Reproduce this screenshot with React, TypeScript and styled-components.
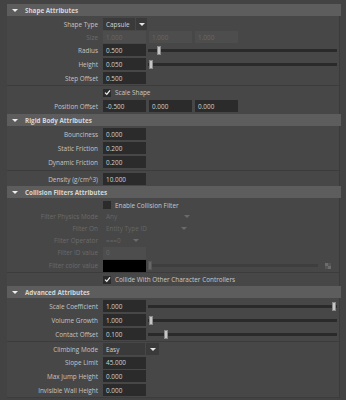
import React from "react";
import styled, { createGlobalStyle } from "styled-components";

const GlobalStyle = createGlobalStyle`
  html, body {
    margin: 0;
    padding: 0;
    background: #434343;
  }
  body {
    font-family: "Open Sans", "Noto Sans", sans-serif;
    font-size: 6.4px;
    color: #c8c8c8;
  }
`;

const Panel = styled.div`
  width: 346px;
  height: 400px;
  overflow: hidden;
  box-sizing: border-box;
  padding: 4px 5px 0 7px;
  display: flex;
  flex-direction: column;
`;

const Header = styled.div`
  height: 12px;
  flex: none;
  background: #5d5d5d;
  display: flex;
  align-items: center;
  padding-left: 5px;
  gap: 7px;
  font-weight: 700;
  font-size: 6.3px;
  color: #d6d6d6;
`;

const Caret = styled.span`
  width: 0;
  height: 0;
  border-left: 3px solid transparent;
  border-right: 3px solid transparent;
  border-top: 3.5px solid #eeeeee;
`;

const Body = styled.div<{ $pt?: number; $pb?: number }>`
  margin-right: 1px;
  background: #474747;
  border-right: 1px solid #3b3b3b;
  padding-top: ${(p) => p.$pt ?? 1}px;
  padding-bottom: ${(p) => p.$pb ?? 0}px;
  display: flex;
  flex-direction: column;
`;

const Row = styled.div<{ $h: number }>`
  height: ${(p) => p.$h}px;
  display: flex;
  align-items: center;
  flex: none;
`;

const Label = styled.div<{ $off?: boolean }>`
  width: 96px;
  flex: none;
  text-align: right;
  padding-right: 5px;
  box-sizing: border-box;
  white-space: nowrap;
  color: ${(p) => (p.$off ? "#6b6b6b" : "#c4c4c4")};
`;

const Field = styled.div<{ $off?: boolean; $w?: number }>`
  width: ${(p) => p.$w ?? 43}px;
  height: 12px;
  flex: none;
  box-sizing: border-box;
  padding-left: 3px;
  display: flex;
  align-items: center;
  background: ${(p) => (p.$off ? "#4d4d4d" : "#2b2b2b")};
  color: ${(p) => (p.$off ? "#686868" : "#d2d2d2")};
`;

const Fields = styled.div`
  display: flex;
  gap: 3px;
`;

const Slider = styled.div<{ $end?: number; $off?: boolean }>`
  position: relative;
  flex: none;
  width: ${(p) => p.$end ?? 189}px;
  margin-left: 2px;
  height: 3px;
  background: ${(p) => (p.$off ? "#3e3e3e" : "#2a2a2a")};
`;

const Thumb = styled.div<{ $off?: boolean }>`
  position: absolute;
  top: -3px;
  width: 4px;
  height: 9px;
  background: ${(p) => (p.$off ? "#666666" : "#c6c6c6")};
  border: 1px solid ${(p) => (p.$off ? "#555555" : "#8a8a8a")};
  box-sizing: border-box;
`;

const Divider = styled.div<{ $h: number }>`
  height: ${(p) => p.$h}px;
  flex: none;
  display: flex;
  align-items: center;
  &::after {
    content: "";
    flex: 1;
    height: 1px;
    background: #3c3c3c;
  }
`;

const Drop = styled.div<{ $w: number; $off?: boolean }>`
  width: ${(p) => p.$w}px;
  height: 12px;
  flex: none;
  display: flex;
  align-items: center;
  box-sizing: border-box;
  padding-left: 3px;
  background: ${(p) => (p.$off ? "transparent" : "#3a3a3a")};
  color: ${(p) => (p.$off ? "#666666" : "#d2d2d2")};
`;

const DropText = styled.span`
  flex: 1;
`;

const DropArrow = styled.div<{ $off?: boolean; $w?: number }>`
  width: ${(p) => p.$w ?? 11}px;
  height: 12px;
  flex: none;
  display: flex;
  align-items: center;
  justify-content: center;
  border-left: 1px solid ${(p) => (p.$off ? "transparent" : "#474747")};
  &::after {
    content: "";
    border-left: 3px solid transparent;
    border-right: 3px solid transparent;
    border-top: 3px solid ${(p) => (p.$off ? "#6a6a6a" : "#e6e6e6")};
  }
`;

const Check = styled.div`
  width: 8px;
  height: 8px;
  flex: none;
  background: #2b2b2b;
  display: flex;
  align-items: center;
  justify-content: center;
`;

const CheckRow = styled.div`
  display: flex;
  align-items: center;
  gap: 4px;
  padding-left: 96px;
  color: #c8c8c8;
  white-space: nowrap;
`;

const Swatch = styled.div`
  width: 43px;
  height: 12px;
  flex: none;
  background: #000000;
`;

const PickerIcon = styled.svg`
  margin-left: 7px;
  flex: none;
`;

const Tick = () => (
  <svg width="7" height="7" viewBox="0 0 7 7">
    <path d="M1 3.6 L2.8 5.4 L6 1.4" stroke="#f0f0f0" strokeWidth="1.3" fill="none" />
  </svg>
);

function NumRow({ label, value, h = 14, thumb }: { label: string; value: string; h?: number; thumb?: number }) {
  return (
    <Row $h={h}>
      <Label>{label}</Label>
      <Field>{value}</Field>
      {thumb !== undefined && (
        <Slider>
          <Thumb style={{ left: thumb }} />
        </Slider>
      )}
    </Row>
  );
}

function SectionHeader({ title }: { title: string }) {
  return (
    <Header>
      <Caret />
      {title}
    </Header>
  );
}

export default function App() {
  return (
    <>
      <GlobalStyle />
      <Panel>
        <SectionHeader title="Shape Attributes" />
        <Body $pb={1}>
          <Row $h={14}>
            <Label>Shape Type</Label>
            <Drop $w={44}>
              <DropText>Capsule</DropText>
              <DropArrow />
            </Drop>
          </Row>
          <Row $h={12}>
            <Label $off>Size</Label>
            <Fields>
              <Field $off>1.000</Field>
              <Field $off>1.000</Field>
              <Field $off>1.000</Field>
            </Fields>
          </Row>
          <NumRow label="Radius" value="0.500" thumb={9} />
          <NumRow label="Height" value="0.050" thumb={1} />
          <NumRow label="Step Offset" value="0.500" />
          <Divider $h={1} />
          <Row $h={13}>
            <CheckRow>
              <Check>
                <Tick />
              </Check>
              Scale Shape
            </CheckRow>
          </Row>
          <Row $h={14}>
            <Label>Position Offset</Label>
            <Fields>
              <Field>-0.500</Field>
              <Field>0.000</Field>
              <Field>0.000</Field>
            </Fields>
          </Row>
        </Body>

        <SectionHeader title="Rigid Body Attributes" />
        <Body>
          <NumRow label="Bounciness" value="0.000" />
          <NumRow label="Static Friction" value="0.200" />
          <NumRow label="Dynamic Friction" value="0.200" />
          <Divider $h={3} />
          <NumRow label="Density (g/cm^3)" value="10.000" />
        </Body>

        <SectionHeader title="Collision Filters Attributes" />
        <Body>
          <Row $h={12}>
            <CheckRow>
              <Check />
              Enable Collision Filter
            </CheckRow>
          </Row>
          <Row $h={11}>
            <Label $off>Filter Physics Mode</Label>
            <Drop $w={89} $off>
              <DropText>Any</DropText>
              <DropArrow $off />
            </Drop>
          </Row>
          <Row $h={12}>
            <Label $off>Filter On</Label>
            <Drop $w={86} $off>
              <DropText>Entity Type ID</DropText>
              <DropArrow $off />
            </Drop>
          </Row>
          <Row $h={12}>
            <Label $off>Filter Operator</Label>
            <Drop $w={38} $off>
              <DropText>===0</DropText>
              <DropArrow $off />
            </Drop>
          </Row>
          <Row $h={13}>
            <Label $off>Filter ID value</Label>
            <Field $off>0</Field>
          </Row>
          <Row $h={13}>
            <Label $off>Filter color value</Label>
            <Swatch />
            <Slider $end={170} $off>
              <Thumb $off style={{ left: 0 }} />
            </Slider>
            <PickerIcon width="6" height="6" viewBox="0 0 6 6">
              <rect x="0" y="0" width="3" height="3" fill="#6c6c6c" />
              <rect x="3" y="3" width="3" height="3" fill="#6c6c6c" />
              <rect x="3" y="0" width="3" height="3" fill="#555555" />
              <rect x="0" y="3" width="3" height="3" fill="#555555" />
            </PickerIcon>
          </Row>
          <Divider $h={1} />
          <Row $h={13}>
            <CheckRow>
              <Check>
                <Tick />
              </Check>
              Collide With Other Character Controllers
            </CheckRow>
          </Row>
        </Body>

        <SectionHeader title="Advanced Attributes" />
        <Body $pb={0}>
          <NumRow label="Scale Coefficient" value="1.000" thumb={184} />
          <NumRow label="Volume Growth" value="1.000" thumb={1} />
          <NumRow label="Contact Offset" value="0.100" thumb={16} />
          <Divider $h={1} />
          <Row $h={14}>
            <Label>Climbing Mode</Label>
            <Drop $w={56}>
              <DropText>Easy</DropText>
              <DropArrow $w={13} />
            </Drop>
          </Row>
          <NumRow label="Slope Limit" value="45.000" h={13} />
          <NumRow label="Max Jump Height" value="0.000" />
          <NumRow label="Invisible Wall Height" value="0.000" />
          <Divider $h={1} />
        </Body>
      </Panel>
    </>
  );
}
